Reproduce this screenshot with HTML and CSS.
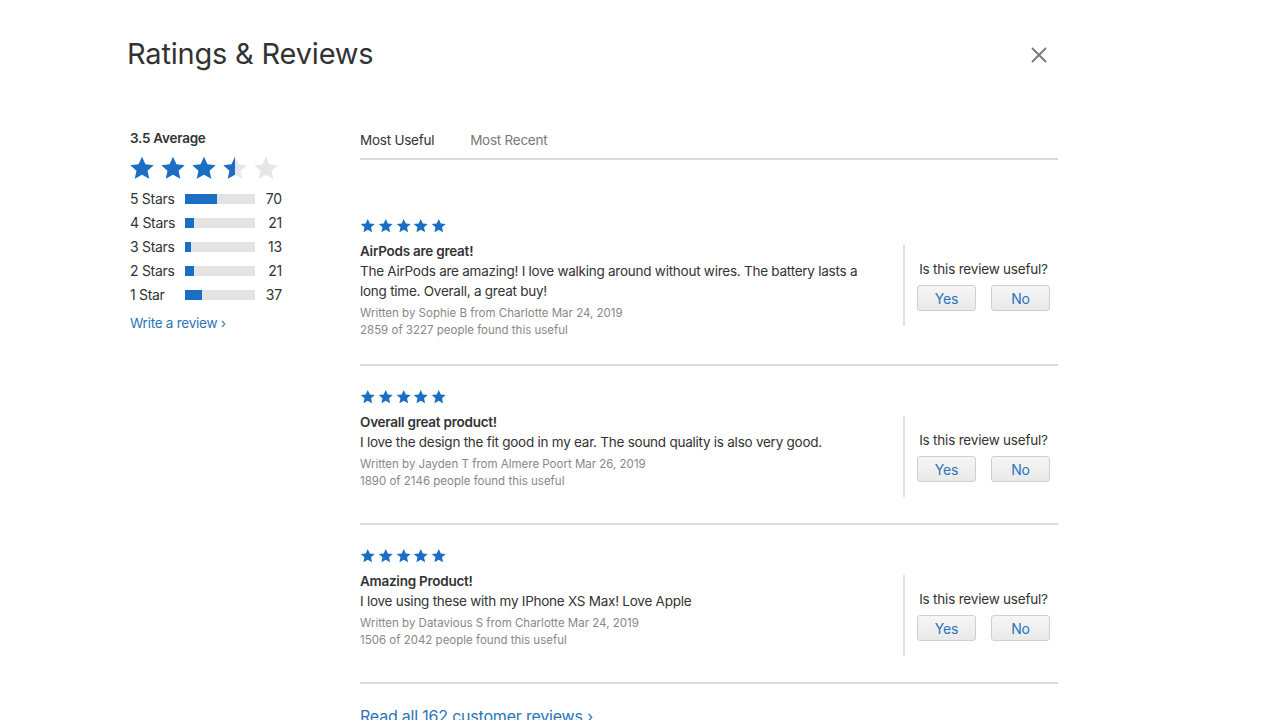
FILE: index.html
```html
<!DOCTYPE html>
<html lang="en">
<head>
<meta charset="utf-8">
<title>Ratings &amp; Reviews</title>
<link rel="stylesheet" href="styles.css">
</head>
<body>
<svg width="0" height="0" class="defs" aria-hidden="true">
  <defs>
    <path id="star" d="M12 1.6l3.2 7 7.6.8-5.7 5.1 1.6 7.5L12 18.2l-6.7 3.8 1.6-7.5L1.2 9.4l7.6-.8z"/>
    <clipPath id="halfclip"><rect x="0" y="0" width="12" height="24"/></clipPath>
  </defs>
</svg>
<div class="page">
  <header class="header">
    <h1 class="title">Ratings &amp; Reviews</h1>
    <button class="close" aria-label="Close">
      <svg width="16" height="16" viewBox="0 0 16 16"><path d="M1.5 1.5L14.5 14.5M14.5 1.5L1.5 14.5" stroke="#7a7a7a" stroke-width="1.9" stroke-linecap="round"/></svg>
    </button>
  </header>
  <div class="content">
    <aside class="summary">
      <div class="avg">3.5 Average</div>
      <div class="bigstars">
        <svg class="bs" viewBox="0 0 24 24"><use href="#star" fill="#1a6fc4"/></svg>
        <svg class="bs" viewBox="0 0 24 24"><use href="#star" fill="#1a6fc4"/></svg>
        <svg class="bs" viewBox="0 0 24 24"><use href="#star" fill="#1a6fc4"/></svg>
        <svg class="bs" viewBox="0 0 24 24"><use href="#star" fill="#e6e6e6"/><use href="#star" fill="#1a6fc4" clip-path="url(#halfclip)"/></svg>
        <svg class="bs" viewBox="0 0 24 24"><use href="#star" fill="#e6e6e6"/></svg>
      </div>
      <div class="dist">
        <div class="row"><span class="lbl">5 Stars</span><span class="bar"><span class="fill" style="width:45%"></span></span><span class="cnt">70</span></div>
        <div class="row"><span class="lbl">4 Stars</span><span class="bar"><span class="fill" style="width:13.5%"></span></span><span class="cnt">21</span></div>
        <div class="row"><span class="lbl">3 Stars</span><span class="bar"><span class="fill" style="width:8.5%"></span></span><span class="cnt">13</span></div>
        <div class="row"><span class="lbl">2 Stars</span><span class="bar"><span class="fill" style="width:13.5%"></span></span><span class="cnt">21</span></div>
        <div class="row"><span class="lbl">1 Star</span><span class="bar"><span class="fill" style="width:24%"></span></span><span class="cnt">37</span></div>
      </div>
      <a class="link write" href="#">Write a review ›</a>
    </aside>
    <main class="reviews">
      <nav class="tabs">
        <span class="tab active">Most Useful</span>
        <span class="tab">Most Recent</span>
      </nav>
      <div class="list">
        <article class="review">
          <div class="text">
            <div class="stars">
              <svg viewBox="0 0 24 24"><use href="#star"/></svg><svg viewBox="0 0 24 24"><use href="#star"/></svg><svg viewBox="0 0 24 24"><use href="#star"/></svg><svg viewBox="0 0 24 24"><use href="#star"/></svg><svg viewBox="0 0 24 24"><use href="#star"/></svg>
            </div>
            <h3 class="rtitle">AirPods are great!</h3>
            <p class="body">The AirPods are amazing! I love walking around without wires. The battery lasts a long time. Overall, a great buy!</p>
            <p class="meta">Written by Sophie B from Charlotte Mar 24, 2019<br>2859 of 3227 people found this useful</p>
          </div>
          <div class="vote">
            <div class="q">Is this review useful?</div>
            <div class="btns"><button class="btn">Yes</button><button class="btn">No</button></div>
          </div>
        </article>
        <article class="review">
          <div class="text">
            <div class="stars">
              <svg viewBox="0 0 24 24"><use href="#star"/></svg><svg viewBox="0 0 24 24"><use href="#star"/></svg><svg viewBox="0 0 24 24"><use href="#star"/></svg><svg viewBox="0 0 24 24"><use href="#star"/></svg><svg viewBox="0 0 24 24"><use href="#star"/></svg>
            </div>
            <h3 class="rtitle">Overall great product!</h3>
            <p class="body">I love the design the fit good in my ear. The sound quality is also very good.</p>
            <p class="meta">Written by Jayden T from Almere Poort Mar 26, 2019<br>1890 of 2146 people found this useful</p>
          </div>
          <div class="vote">
            <div class="q">Is this review useful?</div>
            <div class="btns"><button class="btn">Yes</button><button class="btn">No</button></div>
          </div>
        </article>
        <article class="review">
          <div class="text">
            <div class="stars">
              <svg viewBox="0 0 24 24"><use href="#star"/></svg><svg viewBox="0 0 24 24"><use href="#star"/></svg><svg viewBox="0 0 24 24"><use href="#star"/></svg><svg viewBox="0 0 24 24"><use href="#star"/></svg><svg viewBox="0 0 24 24"><use href="#star"/></svg>
            </div>
            <h3 class="rtitle">Amazing Product!</h3>
            <p class="body">I love using these with my IPhone XS Max! Love Apple</p>
            <p class="meta">Written by Datavious S from Charlotte Mar 24, 2019<br>1506 of 2042 people found this useful</p>
          </div>
          <div class="vote">
            <div class="q">Is this review useful?</div>
            <div class="btns"><button class="btn">Yes</button><button class="btn">No</button></div>
          </div>
        </article>
      </div>
      <a class="link readall" href="#">Read all 162 customer reviews ›</a>
    </main>
  </div>
</div>
</body>
</html>
```

FILE: styles.css
```css
* { box-sizing: border-box; }
html, body { margin: 0; padding: 0; background: #fff; }
body {
  font-family: Inter, "Helvetica Neue", "Liberation Sans", Arial, sans-serif;
  color: #333;
  font-size: 13.5px;
  letter-spacing: -0.25px;
  overflow: hidden;
  height: 720px;
}
.defs { position: absolute; width: 0; height: 0; }
.page { padding: 36px 0 0 127px; width: 1058px; box-sizing: content-box; }
.header {
  display: flex;
  justify-content: space-between;
  align-items: center;
  width: 920px;
  height: 36px;
}
.title {
  margin: 0;
  font-size: 29px;
  font-weight: 400;
  line-height: 36px;
  color: #333;
  letter-spacing: -0.2px;
}
.close {
  border: 0;
  background: none;
  padding: 0;
  width: 16px;
  height: 16px;
  display: flex;
  cursor: pointer;
  margin-top: 2px;
}
.content { display: flex; margin-top: 56px; }
.summary { width: 233px; padding-left: 3px; display: flex; flex-direction: column; align-items: flex-start; }
.avg { font-size: 13.5px; font-weight: 600; line-height: 20px; }
.bigstars { display: flex; gap: 5px; margin-top: 7px; height: 26px; align-items: center; margin-left: -1px; }
.bs { width: 26px; height: 26px; display: block; }
.dist { margin-top: 6px; display: flex; flex-direction: column; }
.row { display: flex; align-items: center; height: 24px; line-height: 24px; }
.lbl { width: 55px; font-size: 14px; letter-spacing: -0.3px; }
.bar { width: 70px; height: 10px; background: #e3e3e3; display: block; }
.fill { display: block; height: 100%; background: #1a6fc4; }
.cnt { width: 27px; text-align: right; font-size: 14px; letter-spacing: -0.2px; }
.link { color: #2a74b8; text-decoration: none; }
.write { margin-top: 6px; line-height: 20px; }
.reviews { width: 698px; }
.tabs {
  display: flex;
  gap: 36px;
  padding: 2px 0 8px;
  border-bottom: 2px solid #dadada;
  line-height: 20px;
}
.tab { color: #777; }
.tab.active { color: #333; }
.list { margin-top: 35px; }
.review {
  display: flex;
  align-items: flex-start;
  padding: 23px 0 26px;
  border-bottom: 2px solid #dadada;
}
.review:first-child { padding-bottom: 25px; }
.text { flex: 1; }
.stars { display: flex; gap: 2.3px; height: 16px; align-items: center; fill: #1a6fc4; }
.stars svg { width: 15.5px; height: 15.5px; display: block; }
.rtitle { margin: 7px 0 0; font-size: 13.5px; font-weight: 600; line-height: 20px; color: #333; }
.body { margin: 0; line-height: 20px; color: #333; max-width: 510px; }
.meta { margin: 4px 0 0; font-size: 11.5px; letter-spacing: 0; line-height: 17px; color: #888; }
.vote {
  width: 155px;
  margin-top: 27px;
  border-left: 2px solid #e0e0e0;
  padding: 14px 0 15px 4px;
  text-align: center;
}
.q { font-size: 13.5px; letter-spacing: -0.2px; line-height: 20px; color: #333; }
.btns { display: flex; justify-content: center; gap: 15px; margin-top: 6px; }
.btn {
  width: 59px;
  height: 26px;
  border: 1px solid #cfcfcf;
  border-radius: 3px;
  background: linear-gradient(#f6f6f6, #e9e9e9);
  color: #2a74b8;
  font-family: inherit;
  font-size: 14px;
  letter-spacing: -0.2px;
  padding: 0;
}
.readall { display: inline-block; margin-top: 22px; font-size: 16px; letter-spacing: -0.2px; line-height: 20px; }
```
